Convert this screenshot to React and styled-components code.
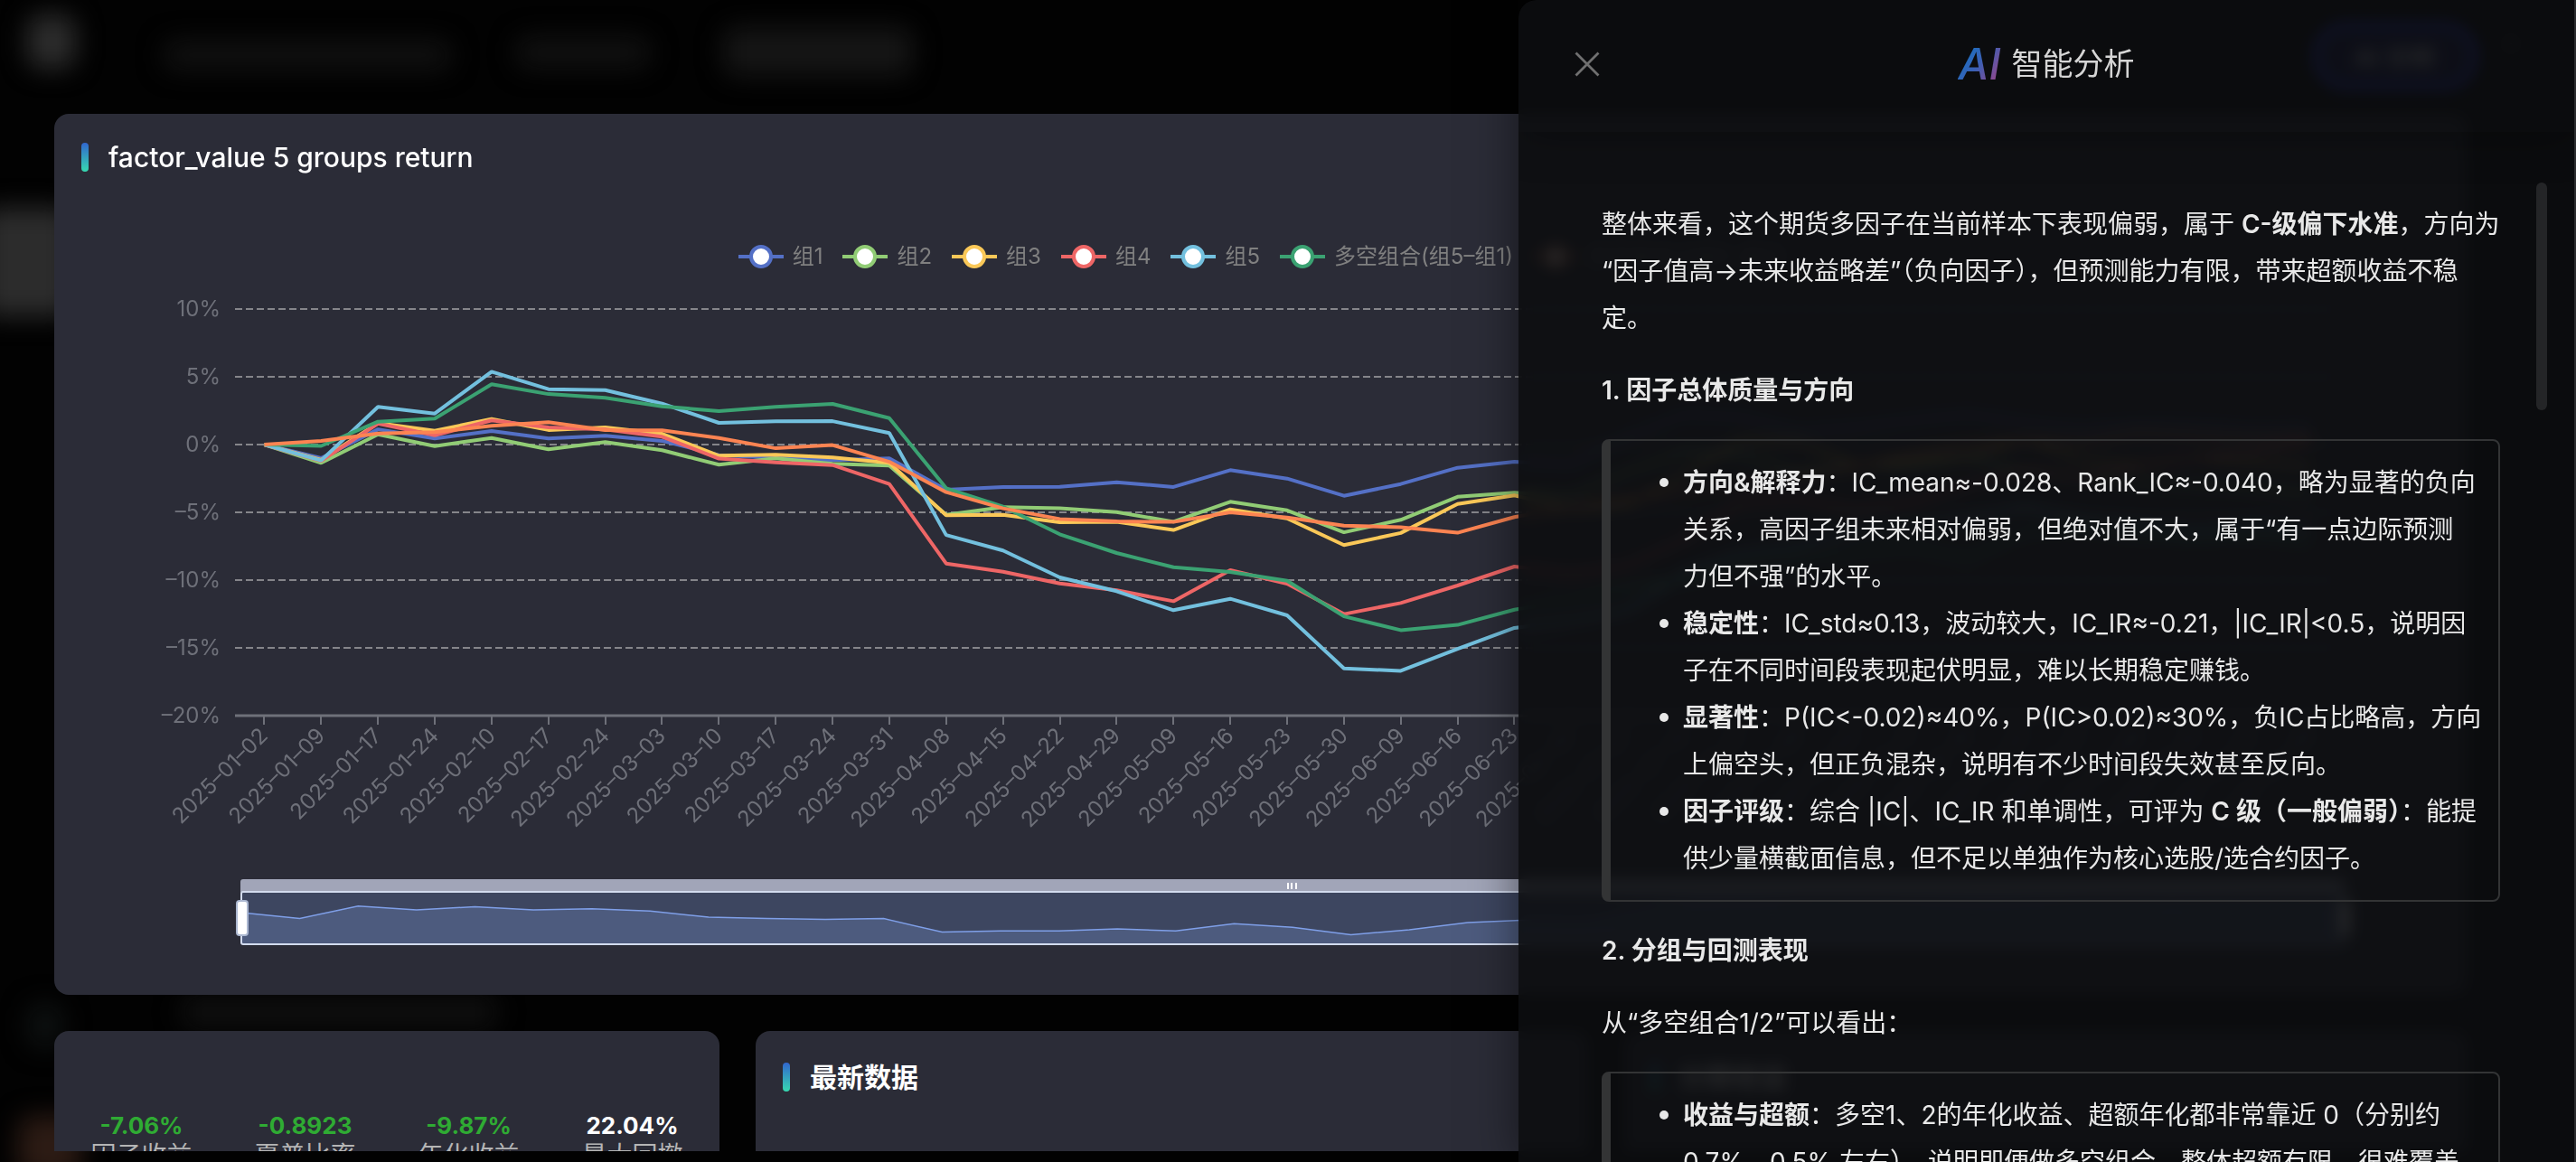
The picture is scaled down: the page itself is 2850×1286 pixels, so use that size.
import React, { useState } from 'react'
import styled, { createGlobalStyle } from 'styled-components'

const GlobalStyle = createGlobalStyle`
  * {
    box-sizing: border-box;
  }
  body {
    margin: 0;
    background: #020202;
    color: #fff;
    font-family: Inter, "Noto Sans CJK SC", sans-serif;
    overflow: hidden;
  }
  button {
    border: 0;
    padding: 0;
    background: none;
    font: inherit;
    color: inherit;
    cursor: pointer;
  }
`

const Page = styled.div`
  position: relative;
  height: 100vh;
  overflow: hidden;
`

/* page under the modal, only seen as a dim blur */
const Ghost = styled.div`
  position: absolute;
  inset: 0;
  filter: blur(14px);
`

const GhostBlock = styled.div`
  position: absolute;
  left: ${p => p.$x}px;
  top: ${p => p.$y}px;
  width: ${p => p.$w}px;
  height: ${p => p.$h}px;
  border-radius: 16px;
  background: ${p => p.$color};
`

const Modal = styled.div`
  position: relative;
  height: 100%;
  padding-bottom: 12px;
  display: flex;
  flex-direction: column;
`

const ModalBar = styled.div`
  flex: none;
  height: 126px;
  padding: 24px 60px 0 0;
  display: flex;
  align-items: flex-start;
  justify-content: flex-end;
  gap: 24px;
  color: #fff;
  font-size: 28px;
`

const AiButton = styled.button`
  width: 184px;
  height: 76px;
  border: 8px solid #2438ff;
  border-radius: 38px;
  background: #1a1c5c;
  font-weight: 600;
`

const BarClose = styled.button`
  height: 44px;
  width: 24px;
  color: #777;
`

const ModalBody = styled.main`
  flex: 1;
  min-height: 0;
  overflow: hidden;
  padding: 0 120px 0 60px;
  display: flex;
  flex-direction: column;
  gap: 40px;
`

const Card = styled.section`
  flex: none;
  background: #2b2c37;
  border-radius: 16px;
`

const CardHead = styled.div`
  display: flex;
  align-items: center;
  gap: 22px;
  padding: ${p => (p.$low ? '35px' : '32px')} 30px 0;
`

const Mark = styled.span`
  width: 8px;
  height: 32px;
  border-radius: 4px;
  background: linear-gradient(180deg, #3166cf, #37d9b0);
`

const CardTitle = styled.h2`
  margin: 0;
  font-size: 30px;
  line-height: 32px;
  font-weight: ${p => p.$weight || 500};
`

const Legend = styled.div`
  display: flex;
  justify-content: center;
  gap: 22px;
  margin-top: 80px;
`

const LegendItem = styled.button`
  display: flex;
  align-items: center;
  gap: 10px;
  font-size: 24px;
  line-height: 28px;
  color: #808080;
  opacity: ${p => (p.$off ? 0.4 : 1)};
`

const ChartSvg = styled.svg`
  display: block;
  width: 100%;
  height: auto;
  font-size: 24px;
  fill: #6e7079;
`

const LowerRow = styled.div`
  flex: none;
  display: grid;
  grid-template-columns: 736fr 921fr 933fr;
  gap: 40px;

  ${Card} {
    height: 600px;
  }
`

const Stats = styled.dl`
  margin: 0;
  padding: 88px 6px 0;
  display: grid;
  grid-template-columns: repeat(4, 1fr);
  text-align: center;
`

const Stat = styled.div`
  display: flex;
  flex-direction: column-reverse;

  dt {
    font-size: 28px;
    line-height: 32px;
    color: #b5b5b5;
  }
  dd {
    margin: 0;
    font-size: 26px;
    line-height: 34px;
    font-weight: 700;
    color: ${p => (p.$down ? '#2fab33' : '#fff')};
  }
`

const Drawer = styled.aside`
  position: absolute;
  top: 0;
  right: 0;
  bottom: 0;
  width: 1170px;
  max-width: 100%;
  display: flex;
  flex-direction: column;
  overflow: hidden;
  border-radius: 20px 0 0 0;
  border-right: 2px solid #2c2d2f;
  background: rgba(12, 13, 15, 0.9);
  backdrop-filter: blur(8px);
  color: #e8e8e8;
`

const DrawerShade = styled.div`
  position: absolute;
  top: 0;
  right: 0;
  bottom: 0;
  width: 1170px;
  box-shadow: 0 0 50px rgba(0, 0, 0, 0.5);
`

const DrawerHead = styled.header`
  flex: none;
  height: 146px;
  padding: 0 62px 4px;
  display: grid;
  grid-template-columns: 28px 1fr 28px;
  align-items: center;
  box-shadow: 0 8px 48px rgba(0, 0, 0, 0.25);
`

const DrawerClose = styled.button`
  display: flex;
  color: #707070;
`

const DrawerTitle = styled.h1`
  margin: 0;
  display: flex;
  align-items: center;
  justify-content: center;
  gap: 12px;
  font-size: 34px;
  line-height: 48px;
  font-weight: 400;
  color: #d5d5d5;
`

const AiWord = styled.span`
  font-size: 48px;
  font-style: italic;
  font-weight: 500;
  background: linear-gradient(125deg, #1a6fc0 20%, #3d5fb4 50%, #8a4a90 85%);
  background-clip: text;
  color: transparent;
`

const Report = styled.article`
  flex: 1;
  min-height: 0;
  overflow: hidden;
  padding: 76px 82px 0 92px;
  font-size: 28px;
  line-height: 52px;

  p,
  h3 {
    margin: 0 0 28px;
    font-size: 28px;
  }
  h3,
  strong {
    font-weight: 600;
  }
`

const Quote = styled.ul`
  margin: 0 0 28px;
  padding: 20px 16px 20px 80px;
  border: 2px solid #333435;
  border-left-width: 10px;
  border-radius: 8px;
  list-style: none;
`

const Point = styled.li`
  position: relative;

  &::before {
    content: '';
    position: absolute;
    left: -26px;
    top: 21px;
    width: 10px;
    height: 10px;
    border-radius: 50%;
    background: #e8e8e8;
  }
`

const Thumb = styled.div`
  position: absolute;
  top: 202px;
  right: 30px;
  width: 12px;
  height: 252px;
  border-radius: 6px;
  background: #242527;
`

const series = [
  {
    name: '组1',
    color: '#5470c6',
    data: [0, -1, 1.13, 0.45, 1, 0.45, 0.65, 0.27, -0.78, -0.98, -1.15, -1.02, -3.33, -3.13, -3.11, -2.78, -3.13, -1.89, -2.51, -3.78, -2.91, -1.71, -1.27, -1.5, 0.6, 2.2, 2, 1, 1.3, 1.8, 2.2, 1.6, 1.2, 1.5, 1.4, 1.1, 1.2],
  },
  {
    name: '组2',
    color: '#91cc75',
    data: [0, -1.35, 0.75, -0.11, 0.49, -0.35, 0.18, -0.42, -1.49, -1.02, -1.42, -1.55, -5.18, -4.62, -4.69, -4.98, -5.69, -4.22, -4.85, -6.47, -5.55, -3.85, -3.55, -3.8, -2, -0.6, -0.8, -2, -1.5, -1.6, -1, -2, -2.4, -2.8, -3, -3.2, -3.6],
  },
  {
    name: '组3',
    color: '#fac858',
    data: [0, -1.13, 1.58, 1.02, 1.89, 1.07, 1.27, 0.8, -0.82, -0.75, -0.95, -1.35, -5.22, -5.18, -5.73, -5.71, -6.31, -4.78, -5.45, -7.42, -6.53, -4.38, -3.75, -4.7, -4.4, -2.2, 0.3, 0.2, -1.5, -1.2, -0.9, 0.4, -1.2, -1.5, -1, -1.3, -1.6],
  },
  {
    name: '组4',
    color: '#ee6666',
    data: [0, -1.2, 1.55, 0.69, 1.78, 1.27, 1.11, 0.58, -1.04, -1.31, -1.51, -2.91, -8.78, -9.38, -10.25, -10.75, -11.56, -9.27, -10.27, -12.51, -11.69, -10.4, -9, -9.5, -8.9, -7, -4.2, -4, -4.8, -4.2, -3, -1.8, -2.4, -1.6, -1, -0.6, 0.2],
  },
  {
    name: '组5',
    color: '#73c0de',
    data: [0, -1.17, 2.78, 2.29, 5.38, 4.09, 4.02, 3.02, 1.6, 1.71, 1.73, 0.85, -6.67, -7.82, -9.8, -10.82, -12.22, -11.38, -12.6, -16.51, -16.69, -15.07, -13.53, -13, -12.2, -9.5, -8, -7.5, -6.4, -6, -5.5, -4.6, -5.6, -6, -6.3, -6, -6.2],
  },
  {
    name: '多空组合(组5–组1)',
    color: '#3ba272',
    data: [0, -0.1, 1.69, 1.91, 4.45, 3.73, 3.45, 2.82, 2.47, 2.78, 3, 1.95, -3.22, -4.58, -6.62, -8, -9.05, -9.4, -10.05, -12.67, -13.69, -13.31, -12.18, -11.5, -10.6, -10, -9, -8.4, -8, -7.6, -8.4, -6.5, -6.2, -6.8, -7, -6.8, -7.2],
  },
  {
    name: '多空组合2(组5–组2)',
    color: '#fc8452',
    data: [0, 0.27, 0.82, 0.91, 1.38, 1.65, 1.07, 1.05, 0.49, -0.27, -0.04, -1.27, -3.51, -4.71, -5.49, -5.67, -5.71, -5, -5.38, -5.98, -6.09, -6.51, -5.35, -4.6, -4, -3.4, -3, -2.4, -1.6, -0.8, 0, 0.3, 0.2, 0.8, 0.6, 0.4, 0.5],
  },
]

const dates = [
  '2025–01–02', '2025–01–09', '2025–01–17', '2025–01–24', '2025–02–10', '2025–02–17',
  '2025–02–24', '2025–03–03', '2025–03–10', '2025–03–17', '2025–03–24', '2025–03–31',
  '2025–04–08', '2025–04–15', '2025–04–22', '2025–04–29', '2025–05–09', '2025–05–16',
  '2025–05–23', '2025–05–30', '2025–06–09', '2025–06–16', '2025–06–23', '2025–06–30',
  '2025–07–07', '2025–07–14', '2025–07–21', '2025–07–28', '2025–08–04', '2025–08–11',
  '2025–08–18', '2025–08–25', '2025–09–01', '2025–09–08', '2025–09–15', '2025–09–22',
  '2025–09–29',
]

const levels = [10, 5, 0, -5, -10, -15, -20]

const stats = [
  { label: '因子收益', value: '-7.06%', down: true },
  { label: '夏普比率', value: '-0.8923', down: true },
  { label: '年化收益', value: '-9.87%', down: true },
  { label: '最大回撤', value: '22.04%', down: false },
]

// plot area in svg units
const LEFT = 200
const RIGHT = 2526
const STEP = (RIGHT - LEFT) / dates.length
const px = i => LEFT + STEP * (i + 0.5) + 1
const py = v => 194 - v * 15

// range slider under the plot
const S_LEFT = 207
const S_RIGHT = 2533
const sx = i => S_LEFT + ((S_RIGHT - S_LEFT) / (dates.length - 1)) * i
const sy = v => 712 - v * 6.5

const toPoints = (data, x, y) => data.map((v, i) => `${x(i).toFixed(1)},${y(v).toFixed(1)}`).join(' ')

function LegendIcon({ color }) {
  return (
    <svg width="50" height="28" viewBox="0 0 50 28" aria-hidden="true">
      <path d="M0 14H50" stroke={color} strokeWidth="4" />
      <circle cx="25" cy="14" r="11" fill="#fff" stroke={color} strokeWidth="4" />
    </svg>
  )
}

function Chart({ hidden }) {
  const overview = toPoints(series[0].data, sx, sy)
  return (
    <ChartSvg viewBox="0 0 2670 803" role="img" aria-label="factor_value 5 groups return">
      {levels.map(v => (
        <g key={v}>
          <text x="184" y={py(v) + 8} textAnchor="end">{v < 0 ? `–${-v}%` : `${v}%`}</text>
          {v > -20 && (
            <path d={`M${LEFT} ${py(v)}H${RIGHT}`} stroke="#85858a" strokeWidth="2" strokeDasharray="8 4" />
          )}
        </g>
      ))}
      <path d={`M${LEFT} 494H${RIGHT}`} stroke="#6e7079" strokeWidth="3" />
      {dates.map((d, i) => (
        <g key={d}>
          <path d={`M${px(i).toFixed(0)} 494v10`} stroke="#6e7079" strokeWidth="2" />
          <text
            transform={`translate(${px(i).toFixed(0)} 512) rotate(-45)`}
            textAnchor="end"
            y="8"
          >
            {d}
          </text>
        </g>
      ))}
      {series.map(s => !hidden.includes(s.name) && (
        <polyline
          key={s.name}
          points={toPoints(s.data, px, py)}
          fill="none"
          stroke={s.color}
          strokeWidth="4"
          strokeLinejoin="bevel"
        />
      ))}

      <rect x={S_LEFT - 1} y="675" width={S_RIGHT - S_LEFT + 2} height="16" rx="3" fill="#a1a5b8" />
      <rect x={S_LEFT} y="689" width={S_RIGHT - S_LEFT} height="58" fill="#3d4660" />
      <polygon points={`${S_LEFT},747 ${overview} ${S_RIGHT},747`} fill="#4d5b7e" />
      <polyline points={overview} fill="none" stroke="#7f9fe8" strokeWidth="1.5" />
      <rect x={S_LEFT} y="689" width={S_RIGHT - S_LEFT} height="58" rx="2" fill="none" stroke="#d2dbee" strokeWidth="2" />
      <path d="M1365 679v7M1369 679v7M1374 679v7" stroke="#fff" strokeWidth="2" />
      {[S_LEFT, S_RIGHT].map(x => (
        <rect key={x} x={x - 5} y="699" width="12" height="38" rx="3" fill="#fff" stroke="#acb8d1" strokeWidth="2" />
      ))}
    </ChartSvg>
  )
}

function AnalysisDrawer({ onClose }) {
  return (
    <>
      <DrawerShade />
      <Drawer>
        <DrawerHead>
          <DrawerClose aria-label="关闭" onClick={onClose}>
            <svg width="28" height="28" viewBox="0 0 28 28" fill="none" stroke="currentColor" strokeWidth="2.8">
              <path d="M1.5 1.5L26.5 26.5M26.5 1.5L1.5 26.5" />
            </svg>
          </DrawerClose>
          <DrawerTitle><AiWord>AI</AiWord>智能分析</DrawerTitle>
        </DrawerHead>
        <Report>
          <p>
            整体来看，这个期货多因子在当前样本下表现偏弱，属于 <strong>C-级偏下水准</strong>，方向为<wbr />“因子值高→未来收益略差”（负向因子），但预测能力有限，带来超额收益不稳定。
          </p>
          <h3>1. 因子总体质量与方向</h3>
          <Quote>
            <Point><strong>方向&amp;解释力</strong>：IC_mean≈-0.028、Rank_IC≈-0.040，略为显著的负向关系，高因子组未来相对偏弱，但绝对值不大，属于“有一点边际预测<br />力但不强”的水平。</Point>
            <Point><strong>稳定性</strong>：IC_std≈0.13，波动较大，IC_IR≈-0.21，|IC_IR|&lt;0.5，说明因子在不同时间段表现起伏明显，难以长期稳定赚钱。</Point>
            <Point><strong>显著性</strong>：P(IC&lt;-0.02)≈40%，P(IC&gt;0.02)≈30%，负IC占比略高，方向上偏空头，但正负混杂，说明有不少时间段失效甚至反向。</Point>
            <Point><strong>因子评级</strong>：综合 |IC|、IC_IR 和单调性，可评为 <strong>C 级（一般偏弱）</strong>：能提供少量横截面信息，但不足以单独作为核心选股/选合约因子。</Point>
          </Quote>
          <h3>2. 分组与回测表现</h3>
          <p>从“多空组合1/2”可以看出：</p>
          <Quote>
            <Point><strong>收益与超额</strong>：多空1、2的年化收益、超额年化都非常靠近 0（分别约 0.7%、0.5% 左右），说明即便做多空组合，整体超额有限，很难覆盖</Point>
          </Quote>
        </Report>
        <Thumb />
      </Drawer>
    </>
  )
}

export default function App() {
  const [open, setOpen] = useState(true)
  const [hidden, setHidden] = useState([])

  const toggle = name => {
    if (hidden.includes(name)) {
      setHidden(hidden.filter(n => n !== name))
    } else {
      setHidden([...hidden, name])
    }
  }

  return (
    <Page lang="zh-CN">
      <GlobalStyle />
      <Ghost>
        <GhostBlock $x={30} $y={16} $w={54} $h={60} $color="#2c2c2c" />
        <GhostBlock $x={180} $y={44} $w={320} $h={34} $color="#101010" />
        <GhostBlock $x={570} $y={40} $w={150} $h={36} $color="#101010" />
        <GhostBlock $x={800} $y={30} $w={210} $h={54} $color="#151515" />
        <GhostBlock $x={-20} $y={230} $w={100} $h={120} $color="#2c2c2c" />
        <GhostBlock $x={30} $y={1110} $w={40} $h={50} $color="#0d1010" />
        <GhostBlock $x={200} $y={1100} $w={350} $h={40} $color="#0e0e0e" />
        <GhostBlock $x={20} $y={1235} $w={70} $h={70} $color="#2c1b14" />
      </Ghost>
      <Modal>
        <ModalBar>
          <AiButton onClick={() => setOpen(true)}>AI 分析</AiButton>
          <BarClose aria-label="关闭">×</BarClose>
        </ModalBar>
        <ModalBody>
          <Card>
            <CardHead>
              <Mark />
              <CardTitle>factor_value 5 groups return</CardTitle>
            </CardHead>
            <Legend>
              {series.map(s => (
                <LegendItem key={s.name} $off={hidden.includes(s.name)} onClick={() => toggle(s.name)}>
                  <LegendIcon color={s.color} />
                  {s.name}
                </LegendItem>
              ))}
            </Legend>
            <Chart hidden={hidden} />
          </Card>
          <LowerRow>
            <Card>
              <Stats>
                {stats.map(s => (
                  <Stat key={s.label} $down={s.down}>
                    <dt>{s.label}</dt>
                    <dd>{s.value}</dd>
                  </Stat>
                ))}
              </Stats>
            </Card>
            <Card>
              <CardHead $low>
                <Mark />
                <CardTitle $weight={600}>最新数据</CardTitle>
              </CardHead>
            </Card>
            <Card>
              <CardHead $low>
                <Mark />
                <CardTitle $weight={600}>分期收益</CardTitle>
              </CardHead>
            </Card>
          </LowerRow>
        </ModalBody>
      </Modal>
      {open && <AnalysisDrawer onClose={() => setOpen(false)} />}
    </Page>
  )
}
